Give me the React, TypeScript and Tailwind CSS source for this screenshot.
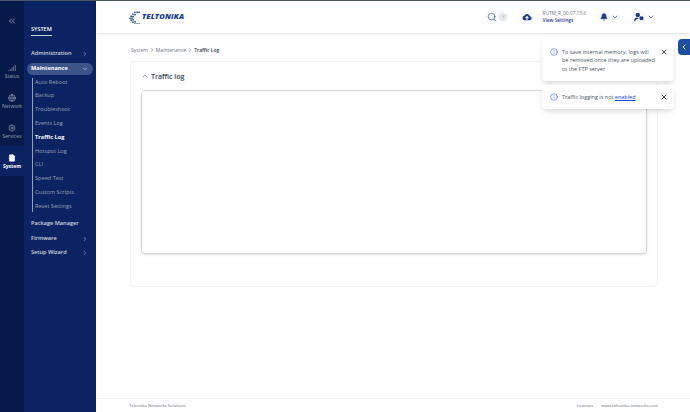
import { Search, Bell, UserCog, ChevronDown, ChevronLeft, ChevronsLeft, ChevronRight, ChevronUp, X, Info, Globe, Settings, FileText, Signal } from "lucide-react";

const rail = [
  { label: "Status", Icon: Signal },
  { label: "Network", Icon: Globe },
  { label: "Services", Icon: Settings },
];

const subItems = ["Auto Reboot", "Backup", "Troubleshoot", "Events Log", "Traffic Log", "Hotspot Log", "CLI", "Speed Test", "Custom Scripts", "Reset Settings"];

function Logo() {
  const dots: [number, number][] = [[6, 0.8], [8.6, 0.8], [11.2, 0.8], [3.6, 3.2], [6.2, 3.6], [1.4, 5.6], [3.8, 6], [0, 8], [2.4, 8], [1.4, 10.4], [3.8, 10], [3.6, 12.8], [6.2, 12.4], [6, 15.2], [8.6, 15.2], [11.2, 15.2]];
  return (
    <div className="flex items-center">
      <svg width="14" height="13" viewBox="0 0 14 16">
        {dots.map(([x, y], i) => (
          <rect key={i} x={x} y={y} width="1.8" height="1.8" fill="#123a8c" />
        ))}
      </svg>
      <span className="text-[7.5px] leading-none font-extrabold italic tracking-wide text-[#123a8c]">TELTONIKA</span>
    </div>
  );
}

function CloudArrow() {
  return (
    <svg viewBox="0 0 24 24" className="size-2.5">
      <path d="M6.5 20a5.5 5.5 0 0 1-.9-10.9A7 7 0 0 1 19 10.1 5 5 0 0 1 18.500 20z" fill="#1c398e" />
      <path d="M12 19v-7M8.500 14.500 12 11l3.500 3.500" fill="none" stroke="white" strokeWidth="2.500" />
    </svg>
  );
}

function Toast({ text }: { text: React.ReactNode }) {
  return (
    <div className="flex w-33 gap-1 rounded-sm bg-white py-2 pl-2 pr-1.5 shadow-md">
      <Info className="size-2 shrink-0 text-blue-700" strokeWidth={1.5} />
      <div className="flex-1 text-[5.5px] leading-[8.33px] text-gray-600">{text}</div>
      <X className="ml-0.25 size-2 shrink-0 text-gray-800" strokeWidth={2.5} />
    </div>
  );
}

export default function App() {
  return (
    <div className="relative flex h-[412px] w-[690px] overflow-hidden border-t border-gray-600 bg-white font-['Open_Sans',sans-serif]">
      <div className="flex w-6 shrink-0 flex-col items-stretch bg-[#061a4a]">
        <div className="flex h-10 items-center justify-center">
          <ChevronsLeft className="size-2.5 text-gray-300" strokeWidth={1.5} />
        </div>
        <div className="h-3.75" />
        {rail.map(({ label, Icon }) => (
          <div key={label} className="flex h-7.5 flex-col items-center justify-center gap-0.5 text-[5px] leading-none text-gray-400">
            <Icon className="size-2 text-gray-400" strokeWidth={2} />
            {label}
          </div>
        ))}
        <div className="flex h-7.5 flex-col items-center justify-center gap-0.5 bg-[#0a2463] text-[5px] leading-none font-bold text-white">
          <FileText className="size-2 fill-white text-white" strokeWidth={1.5} />
          System
        </div>
      </div>

      <div className="flex w-18 shrink-0 flex-col bg-[#0a2463] pt-6.5 text-[5.6px] leading-none text-gray-300">
        <div className="ml-1.75 w-fit border-b border-gray-300 pb-0.5 font-semibold text-white">SYSTEM</div>
        <div className="mt-3.25 flex items-center justify-between py-0.5 pl-1.75 pr-2 font-semibold">
          Administration
          <ChevronRight className="size-1.5" />
        </div>
        <div className="mx-0.75 mt-1 flex h-3 items-center justify-between rounded-full bg-[#3d5488] pl-1 pr-1.25 font-bold text-white">
          Maintenance
          <ChevronDown className="size-1.5" />
        </div>
        <div className="ml-2 mt-0.75 flex flex-col gap-2 border-l border-gray-400 pb-0.5 pl-0.5 pt-0.5 text-gray-400">
          {subItems.map((s) => (
            <div key={s} className={`h-[5.8px] ${s === "Traffic Log" ? "font-bold text-white" : ""}`}>{s}</div>
          ))}
        </div>
        <div className="mt-2.25 px-1.75 font-semibold">Package Manager</div>
        <div className="mt-2.5 flex items-center justify-between pl-1.75 pr-2 font-semibold">
          Firmware
          <ChevronRight className="size-1.5" />
        </div>
        <div className="mt-2 flex items-center justify-between pl-1.75 pr-2 font-semibold">
          Setup Wizard
          <ChevronRight className="size-1.5" />
        </div>
      </div>

      <div className="flex flex-1 flex-col bg-white">
        <div className="flex h-8 items-center justify-between pl-8 pr-8.75 shadow-sm">
          <Logo />
          <div className="flex items-center">
            <div className="flex h-3.5 w-6 items-center gap-0.5 rounded-full bg-gray-50 px-0.5">
              <Search className="size-2.5 shrink-0 text-blue-800" strokeWidth={1.5} />
              <div className="flex size-2 shrink-0 items-center justify-center rounded-sm bg-gray-200 text-[4px] leading-none text-gray-500">/</div>
            </div>
            <div className="ml-2.75 flex size-3.5 items-center justify-center rounded-full bg-gray-50">
              <CloudArrow />
            </div>
            <div className="ml-2 flex flex-col gap-0.5 text-[4.8px] leading-none">
              <span className="text-gray-500">RUTM_R_00.07.13.6</span>
              <span className="font-semibold text-blue-900">View Settings</span>
            </div>
            <div className="ml-2.75 flex size-3.5 items-center justify-center rounded-full bg-gray-50">
              <Bell className="size-2 fill-blue-900 text-blue-900" />
            </div>
            <ChevronDown className="size-2 text-blue-800" />
            <div className="ml-3.25 flex size-3.5 items-center justify-center rounded-full bg-gray-50">
              <UserCog className="size-2.5 fill-blue-900 text-blue-900" strokeWidth={2.5} />
            </div>
            <ChevronDown className="ml-0.25 size-2 text-blue-800" />
          </div>
        </div>

        <div className="flex flex-1 flex-col pl-8.5 pr-8">
          <div className="mt-3.5 flex items-center gap-0.25 pl-0.25 text-[5px] leading-none text-gray-500">
            System <ChevronRight className="size-1.5 text-gray-700" /> Maintenance <ChevronRight className="size-1.5 text-gray-700" />
            <span className="font-semibold text-gray-700">Traffic Log</span>
          </div>
          <div className="mt-2 flex h-56.5 flex-col rounded-sm border border-gray-100 px-2.5">
            <div className="mt-2.5 flex items-center gap-0.5 text-[7px] leading-none font-semibold text-gray-700">
              <ChevronUp className="size-2 text-gray-500" />
              Traffic log
            </div>
            <div className="mt-2.5 h-41 rounded-sm border border-gray-300 shadow-sm" />
          </div>
        </div>

        <div className="flex h-3.5 items-center justify-between border-t border-gray-100 pl-8.25 pr-8 pt-0.5 text-[4.2px] leading-none text-gray-500">
          <span>Teltonika Networks Solutions</span>
          <div className="flex gap-2">
            <span>Licenses</span>
            <span>www.teltonika-networks.com</span>
          </div>
        </div>
      </div>

      <div className="absolute right-4 top-9.75 flex flex-col gap-1">
        <Toast text="To save internal memory, logs will be removed once they are uploaded to the FTP server" />
        <Toast text={<>Traffic logging is not <span className="text-blue-700 underline">enabled</span></>} />
      </div>

      <div className="absolute right-0 top-9.5 flex h-4 w-3 items-center justify-center rounded-l-sm bg-[#1e4da1]">
        <ChevronLeft className="size-2 text-white" strokeWidth={3} />
      </div>
    </div>
  );
}
